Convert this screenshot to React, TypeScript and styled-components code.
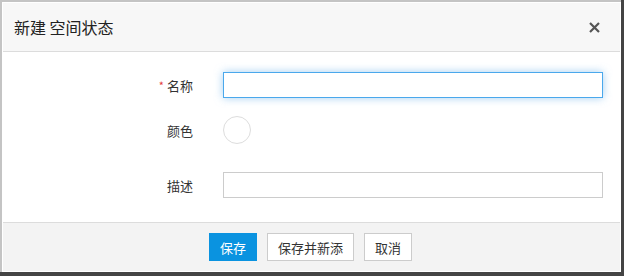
import React, { useState } from 'react'
import styled, { createGlobalStyle } from 'styled-components'

const GlobalStyle = createGlobalStyle`
  html, body {
    margin: 0;
    padding: 0;
    background: #444444;
    font-family: "Noto Sans CJK SC", "Noto Sans", sans-serif;
    font-size: 13px;
    color: #333;
  }
`

const Modal = styled.div`
  width: 619px;
  height: 270px;
  border-left: 2px solid #c4c4c4;
  border-top: 2px solid #c4c4c4;
  background: #fff;
  display: flex;
  flex-direction: column;
`

const Inner = styled.div`
  flex: 1;
  margin: 1px;
  display: flex;
  flex-direction: column;
`

const Header = styled.div`
  height: 48px;
  background: #f7f7f7;
  border-bottom: 1px solid #dcdcdc;
  display: flex;
  align-items: center;
  justify-content: space-between;
  padding: 0 20px 0 11px;
`

const Title = styled.h4`
  margin: 0;
  font-size: 16px;
  font-weight: 400;
  color: #222;
`

const Close = styled.button`
  border: 0;
  background: transparent;
  padding: 0;
  width: 11px;
  height: 11px;
  cursor: pointer;
  display: flex;
`

const Body = styled.div`
  flex: 1;
  padding: 20px 16px 0 0;
  background: #fff;
`

const Field = styled.div<{ $gap?: number }>`
  display: grid;
  grid-template-columns: 190px 380px;
  column-gap: 30px;
  align-items: center;
  margin-bottom: ${(p) => p.$gap ?? 18}px;
`

const Label = styled.label`
  text-align: right;
  color: #333;
  font-size: 13px;
`

const Star = styled.span`
  color: #e4393c;
  font-size: 11px;
  margin-right: 3px;
  vertical-align: 1px;
`

const Input = styled.input<{ $focus?: boolean }>`
  box-sizing: border-box;
  width: 380px;
  height: 26px;
  padding: 0 6px;
  font: inherit;
  outline: none;
  border: 1px solid ${(p) => (p.$focus ? '#4aa8ec' : '#cccccc')};
  box-shadow: ${(p) => (p.$focus ? '0 0 8px rgba(102, 175, 233, 0.6)' : 'none')};
  background: #fff;
`

const Swatch = styled.div`
  width: 26px;
  height: 26px;
  border-radius: 50%;
  border: 1px solid #dddddd;
  background: #fff;
`

const Footer = styled.div`
  height: 48px;
  background: #f3f3f3;
  border-top: 1px solid #dcdcdc;
  display: flex;
  align-items: center;
  justify-content: center;
  gap: 10px;
  padding-right: 2px;
`

const Button = styled.button<{ $primary?: boolean }>`
  box-sizing: border-box;
  height: 28px;
  padding: 0 10px;
  font: inherit;
  font-size: 13px;
  cursor: pointer;
  border: 1px solid ${(p) => (p.$primary ? '#0a93e0' : '#cccccc')};
  background: ${(p) => (p.$primary ? '#0a93e0' : '#ffffff')};
  color: ${(p) => (p.$primary ? '#ffffff' : '#333333')};
`

const App = () => {
  const [name, setName] = useState('')
  const [desc, setDesc] = useState('')

  return (
    <>
      <GlobalStyle />
      <Modal>
        <Inner>
          <Header>
            <Title>新建 空间状态</Title>
            <Close aria-label="close">
              <svg width="11" height="11" viewBox="0 0 11 11">
                <path d="M1 1 L10 10 M10 1 L1 10" stroke="#555" strokeWidth="2.2" />
              </svg>
            </Close>
          </Header>
          <Body>
            <Field>
              <Label><Star>*</Star>名称</Label>
              <Input $focus value={name} onChange={(e) => setName(e.target.value)} />
            </Field>
            <Field $gap={28}>
              <Label>颜色</Label>
              <Swatch />
            </Field>
            <Field $gap={0}>
              <Label>描述</Label>
              <Input value={desc} onChange={(e) => setDesc(e.target.value)} />
            </Field>
          </Body>
          <Footer>
            <Button $primary>保存</Button>
            <Button>保存并新添</Button>
            <Button>取消</Button>
          </Footer>
        </Inner>
      </Modal>
    </>
  )
}

export default App
